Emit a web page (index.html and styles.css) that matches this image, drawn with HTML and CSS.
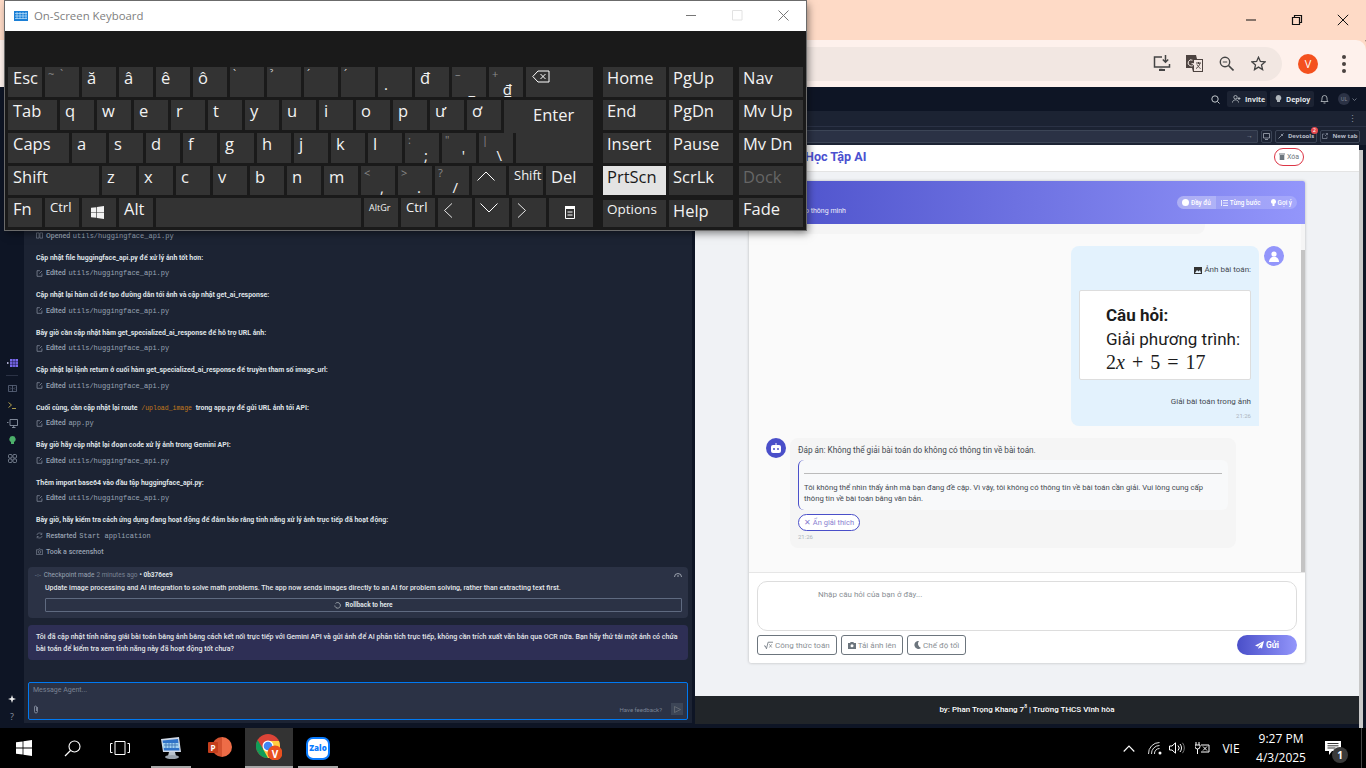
FILE: index.html
```html
<!doctype html>
<html lang="vi">

<head>
  <meta charset="utf-8">
  <title>On-Screen Keyboard</title>
  <link rel="stylesheet" href="styles.css">
</head>

<body>
  <svg class="defs" width="0" height="0">
    <symbol id="i-edit" viewBox="0 0 10 10"><path d="M8.500 5v4h-7V1h4M5 5l3.500-3.500" fill="none" stroke="currentColor" stroke-width=".9"/></symbol>
    <symbol id="i-win" viewBox="0 0 16 16"><path d="M0 2.300 6.600 1.400V7.600H0zM7.400 1.300 16 0V7.600H7.400zM0 8.400H6.600V14.600L0 13.700zM7.400 8.400H16V16L7.400 14.700z" fill="currentColor"/></symbol>
  </svg>

  <div class="browser">
    <div class="chrome-title">
      <span class="win-btn"><svg width="12" height="12" viewBox="0 0 12 12"><path d="M1 6h10" stroke="#111"/></svg></span>
      <span class="win-btn"><svg width="12" height="12" viewBox="0 0 12 12"><path d="M1.500 3.500h7v7h-7zM3.500 3.500v-2h7v7h-2" fill="none" stroke="#111" stroke-width="1.200"/></svg></span>
      <span class="win-btn"><svg width="12" height="12" viewBox="0 0 12 12"><path d="M.8.800l10.400 10.400M11.200.8.800 11.200" stroke="#111"/></svg></span>
    </div>
    <div class="chrome-toolbar">
      <div class="omnibox">
        <span class="omni-icon"><svg width="19" height="17" viewBox="0 0 19 17"><path d="M9 2H1.500v10h15V9M9.500 14.500h-3" fill="none" stroke="#444" stroke-width="1.500"/><path d="M12.500 0v7M9.800 4.500l2.700 2.700 2.700-2.700" fill="none" stroke="#444" stroke-width="1.500"/><path d="M6 15h6" stroke="#444" stroke-width="2"/></svg></span>
        <span class="omni-icon"><svg width="17" height="17" viewBox="0 0 17 17"><path d="M0 0h10l1 4h6v13H7l-1-4H0z" fill="#4d4340"/><path d="M8 5h8v11H8z" fill="#f2e7e2"/><path d="M10 8h5M12.500 7v2M14 8c-.5 2.500-2 4.500-4 5.500M11 9.500c.5 1.500 2 3 3.500 4" fill="none" stroke="#4d4340"/><path d="M6.500 5.200a3 3 0 1 0 1.500 3.500H5.500" fill="none" stroke="#f2e7e2"/></svg></span>
        <span class="omni-icon"><svg width="15" height="15" viewBox="0 0 15 15"><circle cx="6" cy="6" r="4.700" fill="none" stroke="#444" stroke-width="1.400"/><path d="M3.800 6h4.400" stroke="#444"/><path d="M9.500 9.500l5 5" stroke="#444" stroke-width="1.600"/></svg></span>
        <span class="omni-icon"><svg width="15" height="15" viewBox="0 0 15 15"><path d="M7.500 1.200l1.900 4.300 4.600.4-3.500 3.100 1.100 4.600-4.100-2.500-4 2.500 1-4.600L1 5.900l4.600-.4z" fill="none" stroke="#444" stroke-width="1.300"/></svg></span>
      </div>
      <span class="profile">V</span>
      <span class="kebab"><i></i><i></i><i></i></span>
    </div>

    <div class="replit">
      <div class="rp-header">
        <svg class="rp-search" width="9" height="9" viewBox="0 0 9 9"><circle cx="4" cy="4" r="3.200" fill="none" stroke="#c2c8cc"/><path d="M6.500 6.500 8.500 8.500" stroke="#c2c8cc"/></svg>
        <span class="rp-btn rp-invite">
          <svg width="9" height="8" viewBox="0 0 9 8"><circle cx="3.500" cy="2.200" r="1.700" fill="none" stroke="#c2c8cc" stroke-width=".8"/><path d="M.5 7.500c0-3.500 6-3.500 6 0M7 2v3M5.500 3.500h3" fill="none" stroke="#c2c8cc" stroke-width=".8"/></svg>
          Invite
        </span>
        <span class="rp-btn rp-deploy">
          <svg width="7" height="8" viewBox="0 0 7 8"><path d="M3.500 0A3 3 0 0 1 5 5.500V7H2V5.500A3 3 0 0 1 3.500 0z" fill="#b0b6bb"/></svg>
          Deploy
        </span>
        <svg class="rp-bell" width="9" height="10" viewBox="0 0 9 10"><path d="M1 7.500c1-1 1-2 1-3.500a2.500 2.500 0 0 1 5 0c0 1.500 0 2.500 1 3.500zM3.500 9h2" fill="none" stroke="#c2c8cc" stroke-width=".8"/></svg>
        <span class="rp-avatar">UL</span>
        <svg class="rp-caret" width="5" height="3" viewBox="0 0 5 3"><path d="M.5.500 2.500 2.500 4.500.5" fill="none" stroke="#8b93a0" stroke-width=".7"/></svg>
      </div>

      <div class="rp-body">
        <nav class="rail">
          <span class="rail-icon"><svg width="11" height="8" viewBox="0 0 11 8"><path d="M0 3.200h1.500v1.500H0z" fill="#dcd8ff"/><path d="M3 0h8v8H3z" fill="#7c6cf0"/><path d="M3 2.700h8M3 5.300h8M5.700 0v8M8.300 0v8" stroke="#1c1a4a" stroke-width=".6"/></svg></span>
          <span class="rail-sep"></span>
          <span class="rail-icon"><svg width="9" height="7" viewBox="0 0 9 7"><path d="M.5.500h8v6h-8zM4.500.5v6M2 2.500l1 1-1 1M7 2.500l-1 1 1 1" fill="none" stroke="#5f6a80" stroke-width=".8"/></svg></span>
          <span class="rail-icon"><svg width="8" height="7" viewBox="0 0 8 7"><path d="M.5.500 3.500 3 .5 5.500M4 6.500h4" fill="none" stroke="#d6bf58" stroke-width=".8"/></svg></span>
          <span class="rail-icon"><svg width="11" height="9" viewBox="0 0 11 9"><path d="M3 .5h7.500v6H3zM6.700 6.500v2M5 8.500h3.500M0 3.500h1.500" fill="none" stroke="#9aa3b3" stroke-width=".8"/></svg></span>
          <span class="rail-icon"><svg width="7" height="9" viewBox="0 0 7 9"><path d="M3.500 0a3.200 3.200 0 0 1 1.500 6v2H2V6a3.200 3.200 0 0 1 1.500-6z" fill="#4caf6a"/></svg></span>
          <span class="rail-icon"><svg width="9" height="9" viewBox="0 0 9 9"><g fill="none" stroke="#9aa3b3" stroke-width=".7"><rect x=".5" y=".5" width="3.500" height="3.500" rx="1"/><rect x="5" y=".5" width="3.500" height="3.500" rx="1"/><rect x=".5" y="5" width="3.500" height="3.500" rx="1"/><rect x="5" y="5" width="3.500" height="3.500" rx="1"/></g></svg></span>
          <span class="rail-icon rail-bottom"><svg width="8" height="8" viewBox="0 0 8 8"><path d="M4 0l1 3 3 1-3 1-1 3-1-3-3-1 3-1z" fill="#eee"/></svg></span>
          <span class="rail-icon">?</span>
        </nav>

        <section class="agent">
          <div class="agent-log">
            <div class="log-line"><svg class="log-icon" width="7" height="7" viewBox="0 0 8 8"><path d="M.5 1h3v6h-3zM4.500 1h3v6h-3z" fill="none" stroke="currentColor" stroke-width=".6"/></svg>Opened <code>utils/huggingface_api.py</code></div>
            <div class="log-group">
              <p class="log-text">Cập nhật file huggingface_api.py để xử lý ảnh tốt hơn:</p>
              <div class="log-line"><svg class="log-icon" width="7" height="7"><use href="#i-edit"/></svg>Edited <code>utils/huggingface_api.py</code></div>
            </div>
            <div class="log-group">
              <p class="log-text">Cập nhật lại hàm cũ để tạo đường dẫn tới ảnh và cập nhật get_ai_response:</p>
              <div class="log-line"><svg class="log-icon" width="7" height="7"><use href="#i-edit"/></svg>Edited <code>utils/huggingface_api.py</code></div>
            </div>
            <div class="log-group">
              <p class="log-text">Bây giờ cần cập nhật hàm get_specialized_ai_response để hỗ trợ URL ảnh:</p>
              <div class="log-line"><svg class="log-icon" width="7" height="7"><use href="#i-edit"/></svg>Edited <code>utils/huggingface_api.py</code></div>
            </div>
            <div class="log-group">
              <p class="log-text">Cập nhật lại lệnh return ở cuối hàm get_specialized_ai_response để truyền tham số image_url:</p>
              <div class="log-line"><svg class="log-icon" width="7" height="7"><use href="#i-edit"/></svg>Edited <code>utils/huggingface_api.py</code></div>
            </div>
            <div class="log-group">
              <p class="log-text">Cuối cùng, cần cập nhật lại route <code class="log-route">/upload_image</code> trong app.py để gửi URL ảnh tới API:</p>
              <div class="log-line"><svg class="log-icon" width="7" height="7"><use href="#i-edit"/></svg>Edited <code>app.py</code></div>
            </div>
            <div class="log-group">
              <p class="log-text">Bây giờ hãy cập nhật lại đoạn code xử lý ảnh trong Gemini API:</p>
              <div class="log-line"><svg class="log-icon" width="7" height="7"><use href="#i-edit"/></svg>Edited <code>utils/huggingface_api.py</code></div>
            </div>
            <div class="log-group">
              <p class="log-text">Thêm import base64 vào đầu tệp huggingface_api.py:</p>
              <div class="log-line"><svg class="log-icon" width="7" height="7"><use href="#i-edit"/></svg>Edited <code>utils/huggingface_api.py</code></div>
            </div>
            <div class="log-group">
              <p class="log-text">Bây giờ, hãy kiểm tra cách ứng dụng đang hoạt động để đảm bảo rằng tính năng xử lý ảnh trực tiếp đã hoạt động:</p>
              <div class="log-line"><svg class="log-icon" width="7" height="7" viewBox="0 0 8 8"><path d="M1 3.500a3 3 0 0 1 5.500-1M7 4.500a3 3 0 0 1-5.500 1M6.700.8v2H5M1.300 7.200v-2H3" fill="none" stroke="currentColor" stroke-width=".6"/></svg>Restarted <code>Start application</code></div>
              <div class="log-line log-last"><svg class="log-icon" width="7" height="7" viewBox="0 0 8 8"><path d="M.5 2h2l.7-1h1.600l.7 1h2v5.500h-7z" fill="none" stroke="currentColor" stroke-width=".6"/><circle cx="4" cy="4.500" r="1.500" fill="none" stroke="currentColor" stroke-width=".6"/></svg>Took a screenshot</div>
            </div>
          </div>

          <div class="checkpoint">
            <div class="cp-head">
              <span class="cp-dots">-○-</span>
              <span>Checkpoint made</span> <span class="cp-time">2 minutes ago</span> <b>• 0b376ee9</b>
              <svg class="cp-eye" width="8" height="6" viewBox="0 0 8 6"><path d="M.5 5a3.500 3.500 0 0 1 7 0M4 5V3" fill="none" stroke="#b8bec8" stroke-width=".8"/></svg>
            </div>
            <p class="cp-title">Update image processing and AI integration to solve math problems. The app now sends images directly to an AI for problem solving, rather than extracting text first.</p>
            <div class="cp-rollback"><svg width="7" height="7" viewBox="0 0 7 7"><path d="M1.500 1.500a2.800 2.800 0 1 1-.7 2" fill="none" stroke="#c2c8cc" stroke-width=".7"/></svg>Rollback to here</div>
          </div>

          <div class="agent-reply">Tôi đã cập nhật tính năng giải bài toán bằng ảnh bằng cách kết nối trực tiếp với Gemini API và gửi ảnh để AI phân tích trực tiếp, không cần trích xuất văn bản qua OCR nữa. Bạn hãy thử tải một ảnh có chứa bài toán để kiểm tra xem tính năng này đã hoạt động tốt chưa?</div>

          <div class="agent-input">
            <span class="ai-placeholder">Message Agent...</span>
            <div class="ai-foot">
              <svg width="6" height="9" viewBox="0 0 6 9"><path d="M4.500 2v4.500a1.500 1.500 0 0 1-3 0V2a1 1 0 0 1 2 0v4" fill="none" stroke="#9aa3b3" stroke-width=".7"/></svg>
              <span class="ai-feedback">Have feedback?</span>
              <span class="ai-send"><svg width="7" height="7" viewBox="0 0 7 7"><path d="M.5.500 6.500 3.500.5 6.500z" fill="none" stroke="#71757c" stroke-width=".7"/></svg></span>
            </div>
          </div>
        </section>

        <div class="pane-divider"></div>

        <section class="pane">
          <div class="pane-tabs"><span>⋮</span></div>
          <div class="pane-bar">
            <div class="pane-url">→</div>
            <span class="pane-tool pane-device"><svg width="7" height="7" viewBox="0 0 7 7"><path d="M.5.500h6v4.500h-6zM2 6.500h3" fill="none" stroke="#b8bec8" stroke-width=".7"/></svg></span>
            <span class="pane-tool pane-devtools"><svg width="6" height="6" viewBox="0 0 6 6"><path d="M5.500.5 2 4 .5 5.500M3 1l2 2" fill="none" stroke="#9aa3b3" stroke-width=".8"/></svg>Devtools<i class="pane-badge">2</i></span>
            <span class="pane-tool pane-newtab"><svg width="6" height="6" viewBox="0 0 6 6"><path d="M2.500 1H.5v4.500H5V3.500M3 3 5.500.5M3.800.5h1.700v1.700" fill="none" stroke="#9aa3b3" stroke-width=".6"/></svg>New tab</span>
          </div>

          <div class="pv-page">
            <div class="pv-content">
              <header class="pv-head">
                <h1 class="pv-title">Học Tập AI</h1>
                <button class="pv-clear"><svg width="6" height="7" viewBox="0 0 6 7"><path d="M0 .5h6v1H0zM.7 2h4.600v5H.7z" fill="#6c757d"/></svg>Xóa</button>
              </header>

              <main class="pv-main">
                <div class="card">
                  <div class="card-head">
                    <p class="card-sub">o thông minh</p>
                    <div class="mode-pill">
                      <span class="mode mode-on"><svg width="7" height="7" viewBox="0 0 7 7"><circle cx="3.500" cy="3.500" r="3.500" fill="#fff"/></svg>Đầy đủ</span>
                      <span class="mode"><svg width="7" height="6" viewBox="0 0 7 6"><path d="M2 .5h5M2 3h5M2 5.500h5M.5 0v6" stroke="#fff" stroke-width=".8"/></svg>Từng bước</span>
                      <span class="mode"><svg width="5" height="7" viewBox="0 0 5 7"><path d="M2.500 0a2.500 2.500 0 0 1 1 4.800V7h-2V4.800A2.500 2.500 0 0 1 2.500 0z" fill="#fff"/></svg>Gợi ý</span>
                    </div>
                  </div>

                  <div class="card-chat">
                    <div class="chat-scroll">
                      <div class="msg">
                        <span class="avatar avatar-bot"></span>
                        <div class="bubble bubble-old">Hãy gửi câu hỏi hoặc tải ảnh bài toán lên, tôi sẽ giúp bạn giải từng bước thật cụ thể nhé</div>
                      </div>

                      <div class="msg msg-user">
                        <div class="bubble bubble-user">
                          <p class="user-line"><svg width="8" height="7" viewBox="0 0 8 7"><path d="M0 0h8v7H0z" fill="#333"/><path d="M1 6l2-3 1.500 1.500L6 3l1 3z" fill="#e3f2fd"/></svg> Ảnh bài toán:</p>
                          <div class="math-img">
                            <p class="math-q">Câu hỏi:</p>
                            <p class="math-t">Giải phương trình:</p>
                            <p class="math-f">2<i>x</i> + 5 = 17</p>
                          </div>
                          <p class="user-cap">Giải bài toán trong ảnh</p>
                          <span class="msg-time">21:26</span>
                        </div>
                        <span class="avatar avatar-user"><svg width="10" height="11" viewBox="0 0 10 11"><circle cx="5" cy="3" r="2.600" fill="#fff"/><path d="M0 11c0-7 10-7 10 0z" fill="#fff"/></svg></span>
                      </div>

                      <div class="msg">
                        <span class="avatar avatar-bot"><svg width="12" height="11" viewBox="0 0 12 11"><path d="M6 0v2" stroke="#fff"/><rect x="1" y="2" width="10" height="8" rx="2" fill="#fff"/><circle cx="4" cy="6" r="1" fill="#4a4fc9"/><circle cx="8" cy="6" r="1" fill="#4a4fc9"/></svg></span>
                        <div class="bubble bubble-bot">
                          <p>Đáp án: Không thể giải bài toán do không có thông tin về bài toán.</p>
                          <div class="explain">
                            <hr>
                            <p>Tôi không thể nhìn thấy ảnh mà bạn đang đề cập. Vì vậy, tôi không có thông tin về bài toán cần giải. Vui lòng cung cấp thông tin về bài toán bằng văn bản.</p>
                          </div>
                          <button class="hide-btn">✕ Ẩn giải thích</button>
                          <span class="msg-time">21:26</span>
                        </div>
                      </div>
                    </div>
                    <div class="chat-bar"><span class="chat-thumb"></span></div>
                  </div>

                  <div class="card-input">
                    <textarea class="ask-box" placeholder="Nhập câu hỏi của bạn ở đây..."></textarea>
                    <div class="ask-tools">
                      <button class="tool-btn"><svg width="9" height="9" viewBox="0 0 11 9"><path d="M0 5h1.500L3 8.500 5 .5h6" fill="none" stroke="#6c757d"/><path d="M6.500 3l3 4M9.500 3l-3 4" stroke="#6c757d" stroke-width=".8"/></svg>Công thức toán</button>
                      <button class="tool-btn"><svg width="8" height="7" viewBox="0 0 8 7"><path d="M0 1h2l.7-1h2.600L6 1h2v6H0z" fill="#6c757d"/><circle cx="4" cy="3.800" r="1.500" fill="#fff"/></svg>Tải ảnh lên</button>
                      <button class="tool-btn"><svg width="7" height="8" viewBox="0 0 7 8"><path d="M5 0a4 4 0 1 0 2 7A4.500 4.500 0 0 1 5 0z" fill="#6c757d"/></svg>Chế độ tối</button>
                      <button class="send-btn"><svg width="9" height="8" viewBox="0 0 9 8"><path d="M9 0 0 4.500l2.500 1L7 2 3.500 6v2l1.500-1.500 2 1z" fill="#fff"/></svg>Gửi</button>
                    </div>
                  </div>
                </div>
              </main>

              <footer class="pv-foot">by: Phan Trọng Khang 7<sup>8</sup> | Trường THCS Vĩnh hòa</footer>
            </div>
            <div class="pv-scroll"></div>
          </div>
        </section>
      </div>
    </div>
  </div>

  <footer class="taskbar">
    <span class="tb-item"><svg width="16" height="16"><use href="#i-win"/></svg></span>
    <span class="tb-item"><svg width="17" height="17" viewBox="0 0 17 17"><circle cx="10.500" cy="6.500" r="5.500" fill="none" stroke="#fff" stroke-width="1.100"/><path d="M6.500 10.500 1 16" stroke="#fff" stroke-width="1.200"/></svg></span>
    <span class="tb-item"><svg width="20" height="14" viewBox="0 0 20 14"><path d="M5 .5h10v13H5zM2.500 2.500H.5v9h2M17.500 2.500h2v9h-2" fill="none" stroke="#fff"/></svg></span>
    <div class="tb-apps">
      <span class="tb-item tb-app"><svg width="24" height="24" viewBox="0 0 24 24"><path d="M2 3l18-2 2 15H4z" fill="#cfd8e6"/><path d="M3.500 4.500 19 3l1.500 11.500H5z" fill="#2f73c8"/><path d="M4 7h16v5H4z" fill="#9fd0f0"/><path d="M5 9h14M7 7v5M10 7v5M13 7v5M16 7v5" stroke="#3a6fb0" stroke-width=".8"/><path d="M10 16h6l1 4h-8z" fill="#b9c2cc"/><ellipse cx="13" cy="21" rx="7" ry="2" fill="#9aa3ad"/></svg></span>
      <span class="tb-item tb-ppt"><span class="ppt-disc"></span><span class="ppt-p">P</span></span>
      <span class="tb-item tb-active"><svg width="26" height="26" viewBox="0 0 26 26"><circle cx="12" cy="12" r="12" fill="#db4437"/><path d="M12 12 1.600 18A12 12 0 0 0 12 24z" fill="#0f9d58"/><path d="M1.600 6A12 12 0 0 0 1.600 18L7 15z" fill="#0f9d58"/><path d="M23 7H12l-5 8 5 9A12 12 0 0 0 24 12a12 12 0 0 0-1-5z" fill="#ffcd40"/><circle cx="12" cy="12" r="5.500" fill="#fff"/><circle cx="12" cy="12" r="4.300" fill="#4285f4"/><circle cx="19" cy="19" r="7.500" fill="#e8501f"/></svg><span class="chrome-v">V</span></span>
      <span class="tb-item tb-app"><span class="zalo">Zalo</span></span>
    </div>
    <div class="tray">
      <span class="tray-item"><svg width="12" height="7" viewBox="0 0 12 7"><path d="M.7 6.500 6 1l5.300 5.500" fill="none" stroke="#fff" stroke-width="1.100"/></svg></span>
      <span class="tray-item"><svg width="15" height="13" viewBox="0 0 15 13"><g fill="none" stroke="#ddd"><path d="M0.500 12a11 11 0 0 1 11-11.500"/><path d="M3.500 12a8 8 0 0 1 8-8.500"/><path d="M6.500 12a5 5 0 0 1 5-5.500"/></g><circle cx="12" cy="11" r="1.500" fill="#fff"/></svg></span>
      <span class="tray-item"><svg width="16" height="12" viewBox="0 0 16 12"><path d="M.5 4h2.500L6.500.8v10.400L3 8H.5z" fill="none" stroke="#fff"/><path d="M9 3.500a3.500 3.500 0 0 1 0 5M11 2a6 6 0 0 1 0 8" fill="none" stroke="#fff"/><path d="M13.500 .8a9 9 0 0 1 0 10.400" fill="none" stroke="#777"/></svg></span>
      <span class="tray-item"><svg width="15" height="12" viewBox="0 0 15 12"><path d="M1 0v3M4 0v3M0 3h5v1.500a2.500 2.500 0 0 1-5 0zM2.500 7v5" fill="none" stroke="#fff"/><path d="M6 3h8v7H6" fill="none" stroke="#fff"/><path d="M8 4.500l4 4M12 4.500l-4 4" stroke="#fff"/></svg></span>
      <span class="tray-item tray-lang">VIE</span>
      <span class="tray-item tray-clock"><span>9:27 PM</span><span>4/3/2025</span></span>
      <span class="tray-item tray-notif"><svg width="16" height="14" viewBox="0 0 16 14"><path d="M0 0h16v10H7l-3 4v-4H0z" fill="#fff"/><path d="M2.500 2.500h11M2.500 4.800h11M2.500 7h8" stroke="#000" stroke-width=".8"/></svg><i class="notif-count">1</i></span>
      <span class="tray-spacer"></span>
      <span class="tray-peek"></span>
    </div>
  </footer>

  <!-- on-screen keyboard floats over the browser -->
  <div class="osk">
    <div class="osk-title">
      <svg width="14" height="10" viewBox="0 0 14 10"><path d="M0 0h14v10H0z" fill="#1b7fd6"/><path d="M1 2.500h12M1 5h12M1 7.500h12M3 1v7M6 1v7M9 1v7M12 1v7" stroke="#bfe3fa" stroke-width=".7"/></svg>
      <span class="osk-name">On-Screen Keyboard</span>
      <span class="osk-ctl osk-min"><svg width="11" height="11" viewBox="0 0 11 11"><path d="M0 5.500h10" stroke="#777"/></svg></span>
      <span class="osk-ctl"><svg width="11" height="11" viewBox="0 0 11 11"><path d="M.5.500h9.500v9.500H.5z" fill="none" stroke="#e2e2e2"/></svg></span>
      <span class="osk-ctl"><svg width="11" height="11" viewBox="0 0 11 11"><path d="M.5.500l10 10M10.500.5l-10 10" stroke="#777"/></svg></span>
    </div>
    <div class="osk-body">
      <div class="osk-main">
        <div class="key-row">
          <span class="key">Esc</span>
          <span class="key key-dual"><span class="hi">~ &nbsp;ˋ</span></span>
          <span class="key">ă</span><span class="key">â</span><span class="key">ê</span><span class="key">ô</span>
          <span class="key key-dual"><span class="hi hi-w">`</span></span>
          <span class="key key-dual"><span class="hi hi-w">ˀ</span></span>
          <span class="key key-dual"><span class="hi hi-w">´</span></span>
          <span class="key key-dual"><span class="hi hi-w">´</span></span>
          <span class="key key-dual"><span class="lo lo-dot">.</span></span>
          <span class="key">đ</span>
          <span class="key key-dual"><span class="hi">–</span><span class="lo">_</span></span>
          <span class="key key-dual"><span class="hi">+</span><span class="lo">₫</span></span>
          <span class="key key-back"><svg width="18" height="13" viewBox="0 0 18 13"><path d="M6 1h11v11H6L.8 6.500z" fill="none" stroke="#fff"/><path d="M8.500 4l5 5M13.500 4l-5 5" stroke="#fff"/></svg></span>
        </div>
        <div class="key-row">
          <span class="key key-tab">Tab</span>
          <span class="key">q</span><span class="key">w</span><span class="key">e</span><span class="key">r</span><span class="key">t</span><span class="key">y</span><span class="key">u</span><span class="key">i</span><span class="key">o</span><span class="key">p</span><span class="key">ư</span><span class="key">ơ</span>
          <span class="key key-enter">Enter</span>
        </div>
        <div class="key-row">
          <span class="key key-caps">Caps</span>
          <span class="key">a</span><span class="key">s</span><span class="key">d</span><span class="key">f</span><span class="key">g</span><span class="key">h</span><span class="key">j</span><span class="key">k</span><span class="key">l</span>
          <span class="key key-dual"><span class="hi">:</span><span class="lo">;</span></span>
          <span class="key key-dual"><span class="hi">"</span><span class="lo">'</span></span>
          <span class="key key-dual"><span class="hi">|</span><span class="lo">\</span></span>
          <span class="key key-enter2"></span>
        </div>
        <div class="key-row key-row-low">
          <span class="key key-shift">Shift</span>
          <span class="key">z</span><span class="key">x</span><span class="key">c</span><span class="key">v</span><span class="key">b</span><span class="key">n</span><span class="key">m</span>
          <span class="key key-dual"><span class="hi">&lt;</span><span class="lo">,</span></span>
          <span class="key key-dual"><span class="hi">&gt;</span><span class="lo">.</span></span>
          <span class="key key-dual"><span class="hi">?</span><span class="lo">/</span></span>
          <span class="key key-arrow"><svg width="18" height="10" viewBox="0 0 18 10"><path d="M.5 9.500 9 1l8.500 8.500" fill="none" stroke="#fff"/></svg></span>
          <span class="key key-sm">Shift</span>
          <span class="key key-del">Del</span>
        </div>
        <div class="key-row key-row-low">
          <span class="key">Fn</span>
          <span class="key key-sm">Ctrl</span>
          <span class="key key-win"><svg width="13" height="13"><use href="#i-win"/></svg></span>
          <span class="key">Alt</span>
          <span class="key key-space"></span>
          <span class="key key-xs">AltGr</span>
          <span class="key key-sm">Ctrl</span>
          <span class="key key-arrow"><svg width="10" height="15" viewBox="0 0 10 17"><path d="M9.500.5 1 8.500l8.500 8" fill="none" stroke="#fff"/></svg></span>
          <span class="key key-arrow"><svg width="18" height="10" viewBox="0 0 18 10"><path d="M.5.500 9 9 17.500.5" fill="none" stroke="#fff"/></svg></span>
          <span class="key key-arrow"><svg width="10" height="15" viewBox="0 0 10 17"><path d="M.5.500 9 8.500l-8.500 8" fill="none" stroke="#fff"/></svg></span>
          <span class="key key-menu"><svg width="10" height="13" viewBox="0 0 10 13"><path d="M.5 2.500h9v10h-9z" fill="none" stroke="#fff"/><path d="M0 .5h10v2H0zM2.500 6h5M2.500 9h5" stroke="#fff" fill="#fff"/></svg></span>
        </div>
      </div>
      <div class="osk-side">
        <span class="key">Home</span><span class="key">PgUp</span><span class="key">Nav</span>
        <span class="key">End</span><span class="key">PgDn</span><span class="key">Mv Up</span>
        <span class="key">Insert</span><span class="key">Pause</span><span class="key">Mv Dn</span>
        <span class="key key-on">PrtScn</span><span class="key">ScrLk</span><span class="key key-off">Dock</span>
        <span class="key key-opt">Options</span><span class="key key-help">Help</span><span class="key">Fade</span>
      </div>
    </div>
  </div>
</body>

</html>
```

FILE: styles.css
```css
* {
  box-sizing: border-box;
}

html,
body {
  margin: 0;
  padding: 0;
  width: 1366px;
  height: 768px;
  overflow: hidden;
  background: #000;
  font-family: "Open Sans", "Noto Sans", sans-serif;
}

p,
h1 {
  margin: 0;
}

button {
  font: inherit;
  cursor: pointer;
}

svg {
  display: block;
  flex: none;
}

.defs {
  position: absolute;
}

/* browser window */
.browser {
  height: 728px;
  display: flex;
  flex-direction: column;
}

.chrome-title {
  height: 40px;
  background: #fedac6;
  display: flex;
  justify-content: flex-end;
}

.win-btn {
  width: 46px;
  display: flex;
  align-items: center;
  justify-content: center;
}

.chrome-toolbar {
  height: 47px;
  background: #fef1ec;
  border-radius: 0 10px 0 0;
  display: flex;
  align-items: center;
  padding-right: 12px;
  box-shadow: 0 -8px 0 #fedac6;
}

.omnibox {
  margin-left: 100px;
  flex: 1;
  height: 34px;
  border-radius: 17px;
  background: #f2e7e2;
  display: flex;
  justify-content: flex-end;
  padding-right: 8px;
}

.omni-icon {
  width: 32px;
  display: flex;
  align-items: center;
  justify-content: center;
}

.profile {
  margin-left: 16px;
  width: 20px;
  height: 20px;
  border-radius: 50%;
  background: #f4511e;
  color: #fff;
  font-size: 11px;
  line-height: 20px;
  text-align: center;
}

.kebab {
  margin-left: 16px;
  width: 20px;
  display: flex;
  flex-direction: column;
  align-items: center;
  gap: 3px;
}

.kebab i {
  width: 4px;
  height: 4px;
  border-radius: 50%;
  background: #4a4340;
}

/* replit shell */
.replit {
  flex: 1;
  min-height: 0;
  background: #0e1525;
  display: flex;
  flex-direction: column;
  color: #c2c8cc;
}

.rp-header {
  height: 24px;
  display: flex;
  align-items: center;
  justify-content: flex-end;
  padding-right: 9px;
  font-size: 7px;
}

.rp-search {
  margin-right: 7px;
}

.rp-btn {
  height: 16px;
  background: #1c2333;
  border-radius: 2px;
  display: flex;
  align-items: center;
  gap: 4px;
  padding: 0 5px;
  font-weight: 700;
  color: #e4e7ea;
}

.rp-invite {
  width: 40px;
}

.rp-deploy {
  width: 44px;
  margin-left: 3px;
}

.rp-bell {
  margin-left: 6px;
}

.rp-avatar {
  margin-left: 9px;
  width: 12px;
  height: 12px;
  border-radius: 50%;
  background: #2b3245;
  color: #8b93a0;
  font-size: 5px;
  line-height: 12px;
  text-align: center;
}

.rp-caret {
  margin-left: 2px;
}

.rp-body {
  flex: 1;
  min-height: 0;
  display: flex;
}

.rail {
  width: 24px;
  display: flex;
  flex-direction: column;
  align-items: center;
  padding: 243px 0 3px;
}

.rail-icon {
  width: 18px;
  height: 17.500px;
  display: flex;
  align-items: center;
  justify-content: center;
  color: #8b93a0;
  font-size: 9px;
}

.rail-sep {
  width: 12px;
  height: 1px;
  margin: 3px 0 4px;
  background: #2b3245;
}

.rail-bottom {
  margin-top: auto;
}

/* agent panel */
.agent {
  width: 668px;
  margin-bottom: 5px;
  background: #1c2333;
  display: flex;
  flex-direction: column;
  justify-content: flex-end;
  padding: 0 4px 3px;
  overflow: hidden;
  font-family: Roboto, sans-serif;
}

.agent-log {
  padding: 0 0 8px 8px;
  display: flex;
  flex-direction: column;
  gap: 7.500px;
}

.log-group {
  display: flex;
  flex-direction: column;
}

.log-text {
  height: 15px;
  line-height: 15px;
  font-size: 6.950px;
  font-weight: 700;
  color: #dfe2e6;
  white-space: nowrap;
}

.log-route {
  margin: 0 2px;
  font: 6.500px "Liberation Mono", monospace;
  color: #c37a1c;
}

.log-line {
  height: 15px;
  display: flex;
  align-items: center;
  font-size: 7px;
  font-weight: 500;
  color: #9aa3b3;
  white-space: pre;
}

.log-last {
  margin-top: 1px;
}

.log-line code {
  margin-left: 1px;
  font: 7px "Liberation Mono", monospace;
}

.log-icon {
  margin-right: 3px;
  color: #9aa3b3;
}

.checkpoint {
  height: 51px;
  background: #2b3245;
  border-radius: 4px;
  padding: 3px 6px 0 7px;
  font-size: 6.500px;
  color: #9aa3b3;
}

.cp-head {
  height: 10px;
  display: flex;
  align-items: center;
  gap: 2px;
}

.cp-dots {
  font-size: 5px;
  margin-right: 1px;
}

.cp-time {
  color: #7a8394;
}

.cp-head b {
  color: #dfe2e6;
}

.cp-eye {
  margin-left: auto;
}

.cp-title {
  margin: 3px 0 0 10px;
  height: 10px;
  line-height: 10px;
  font-size: 7.030px;
  font-weight: 500;
  color: #e4e7ea;
  white-space: nowrap;
}

.cp-rollback {
  margin: 5px 0 0 10px;
  height: 14px;
  border: 1px solid #5f6a80;
  border-radius: 1px;
  display: flex;
  align-items: center;
  justify-content: center;
  gap: 4px;
  font-weight: 700;
  color: #dfe2e6;
}

.agent-reply {
  margin-top: 7px;
  height: 35px;
  padding: 6px 8px 0;
  background: #2e2f55;
  border-radius: 4px;
  font-size: 7.100px;
  line-height: 12px;
  font-weight: 500;
  color: #e4e7ea;
}

.agent-input {
  margin-top: 22px;
  height: 38px;
  background: #2b3245;
  border: 1px solid #0079f2;
  border-radius: 2px;
  padding: 3px 4px 4px 4px;
  display: flex;
  flex-direction: column;
  justify-content: space-between;
  font-size: 7px;
  color: #7a8394;
}

.ai-foot {
  display: flex;
  align-items: center;
}

.ai-feedback {
  margin-left: auto;
  font-size: 6px;
}

.ai-send {
  margin-left: 9px;
  width: 12px;
  height: 12px;
  background: #3c4556;
  display: flex;
  align-items: center;
  justify-content: center;
}

.pane-divider {
  width: 3px;
}

/* preview pane */
.pane {
  flex: 1;
  min-width: 0;
  display: flex;
  flex-direction: column;
  background: #1c2333;
}

.pane-tabs {
  height: 15px;
  background: #1c2333;
  display: flex;
  justify-content: flex-end;
  padding-right: 9px;
  font-size: 9px;
  line-height: 15px;
  color: #8b93a0;
}

.pane-bar {
  height: 19px;
  border-top: 1px solid #2b3245;
  display: flex;
  align-items: center;
  padding-right: 6px;
  font-size: 6px;
  font-weight: 700;
}

.pane-url {
  flex: 1;
  height: 13px;
  background: #2b3245;
  border: 1px solid #3c4556;
  border-radius: 1px;
  text-align: right;
  padding-right: 4px;
  font-size: 7px;
  line-height: 10px;
  color: #8b93a0;
}

.pane-tool {
  height: 13px;
  margin-left: 3px;
  border: 1px solid #3c4556;
  border-radius: 2px;
  display: flex;
  align-items: center;
  justify-content: center;
  gap: 4px;
  position: relative;
  color: #b8bec8;
}

.pane-device {
  width: 11px;
}

.pane-devtools {
  width: 42px;
}

.pane-newtab {
  width: 40px;
}

.pane-badge {
  position: absolute;
  top: -4px;
  right: -2px;
  width: 7px;
  height: 7px;
  border-radius: 50%;
  background: #e5484d;
  color: #fff;
  font: 5px/7px "Noto Sans", sans-serif;
  text-align: center;
}

.pv-page {
  flex: 1;
  min-height: 0;
  display: flex;
  padding-right: 3px;
  padding-bottom: 4px;
  background: #0e1525;
}

.pv-content {
  width: 664px;
  display: flex;
  flex-direction: column;
  font-family: Roboto, sans-serif;
}

.pv-scroll {
  width: 4px;
  margin-top: 5px;
  margin-bottom: -4px;
  background: #c9c9c9;
}

.pv-head {
  height: 27px;
  background: #fff;
  border-bottom: 1px solid #e4e4e4;
  display: flex;
  align-items: center;
  justify-content: space-between;
  padding: 0 55px 3px 110px;
}

.pv-title {
  font-size: 12.600px;
  font-weight: 700;
  color: #4a50d0;
}

.pv-clear {
  width: 30px;
  height: 18px;
  padding: 0;
  background: #fff;
  border: 1px solid #dc3545;
  border-radius: 9px;
  display: flex;
  align-items: center;
  justify-content: center;
  gap: 2px;
  font-size: 7px;
  color: #6c757d;
}

.pv-main {
  flex: 1;
  min-height: 0;
  background: #f0f2f5;
  padding: 9px 0 0 54px;
}

.pv-foot {
  height: 28px;
  background: #212529;
  color: #fff;
  font-size: 8px;
  font-weight: 500;
  line-height: 28px;
  text-align: center;
}

.pv-foot sup {
  font-size: 5px;
  line-height: 0;
}

/* chat card */
.card {
  width: 556px;
  height: 482px;
  background: #fff;
  border-radius: 2px;
  box-shadow: 0 0 3px rgba(0, 0, 0, .25);
  display: flex;
  flex-direction: column;
  overflow: hidden;
}

.card-head {
  height: 43px;
  background: linear-gradient(90deg, #4a4fc9, #9396fb);
  display: flex;
  align-items: center;
  justify-content: space-between;
  padding: 0 8px 0 56px;
  color: #fff;
}

.card-sub {
  margin-top: 17px;
  font-size: 7px;
  line-height: 9px;
  opacity: .9;
}

.mode-pill {
  height: 13px;
  border-radius: 7px;
  background: rgba(255, 255, 255, .18);
  display: flex;
  font-size: 6.400px;
  font-weight: 500;
}

.mode {
  display: flex;
  align-items: center;
  gap: 2px;
  padding: 0 5px;
}

.mode-on {
  background: rgba(255, 255, 255, .2);
  border-radius: 7px 0 0 7px;
}

.card-chat {
  flex: 1;
  min-height: 0;
  display: flex;
  background: #fafafa;
}

.chat-scroll {
  flex: 1;
  min-width: 0;
  display: flex;
  flex-direction: column;
  justify-content: flex-end;
  gap: 12px;
  padding: 0 17px 24px 17px;
  overflow: hidden;
}

.chat-bar {
  width: 4px;
  padding-top: 26px;
  background: #f5f5f5;
}

.chat-thumb {
  display: block;
  height: 100%;
  background: #c4c4c4;
}

.msg {
  display: flex;
  gap: 4px;
  flex: none;
  align-items: flex-start;
}

.msg-user {
  justify-content: flex-end;
  gap: 5px;
}

.avatar {
  width: 20px;
  height: 20px;
  border-radius: 50%;
  display: flex;
  align-items: center;
  justify-content: center;
  flex: none;
}

.avatar-bot {
  background: #4a4fc9;
}

.avatar-user {
  background: #9396fb;
}

.bubble {
  border-radius: 8px;
  font-size: 8.200px;
  line-height: 12px;
  color: #444a52;
}

.bubble-old {
  width: 415px;
  height: 34px;
  padding: 13px 0 0 70px;
  background: #f5f5f5;
  white-space: nowrap;
}

.bubble-user {
  width: 188px;
  background: #e3f2fd;
  padding: 18px 8px 7px;
  display: flex;
  flex-direction: column;
  align-items: flex-end;
  border-radius: 8px 8px 0 8px;
  font-size: 8px;
}

.user-line {
  display: flex;
  align-items: center;
  gap: 2px;
}

.math-img {
  margin-top: 14px;
  width: 172px;
  height: 90px;
  background: #fff;
  border: 1px solid #ddd;
  border-radius: 2px;
  padding: 12px 0 0 26px;
  color: #1c1c1c;
  font-size: 17px;
  line-height: 24px;
}

.math-q {
  font-weight: 700;
}

.math-f {
  font: 20px/23px "Liberation Serif", serif;
  word-spacing: 2px;
}

.user-cap {
  margin-top: 16px;
}

.msg-time {
  display: block;
  margin-top: 5px;
  font-size: 6px;
  line-height: 6px;
  color: #adb5bd;
}

.bubble-bot {
  width: 446px;
  padding: 6px 8px 8px;
  background: #f5f5f5;
}

.explain {
  margin-top: 4px;
  height: 50px;
  background: #f8f9fa;
  border-left: 1px solid #4a4fc9;
  border-radius: 6px;
  padding: 13px 6px 0 5px;
  font-size: 7.700px;
  line-height: 11px;
}

.explain hr {
  margin: 0 0 7.500px;
  border: 0;
  height: 1px;
  background: #bbb;
}

.hide-btn {
  display: block;
  margin-top: 4px;
  width: 62px;
  height: 17px;
  padding: 0;
  background: #fff;
  border: 1px solid #4a4fc9;
  border-radius: 9px;
  font-size: 7.500px;
  color: #8a7fd0;
}

.bubble-bot .msg-time {
  margin-top: 3px;
}

.card-input {
  height: 91px;
  border-top: 1px solid #e6e6e6;
  padding: 8px 8px 0 8px;
}

.ask-box {
  display: block;
  width: 100%;
  height: 50px;
  border: 1px solid #ddd;
  border-radius: 10px;
  padding: 7px 0 0 60px;
  resize: none;
  font: 8px/11px Roboto, sans-serif;
}

.ask-box::placeholder {
  color: #8a8f95;
}

.ask-tools {
  margin-top: 4px;
  display: flex;
  gap: 4px;
}

.tool-btn {
  height: 20px;
  padding: 0 6px;
  background: #fff;
  border: 1px solid #6c757d;
  border-radius: 3px;
  display: flex;
  align-items: center;
  gap: 2px;
  font-size: 8px;
  color: #8a8f95;
}

.send-btn {
  margin-left: auto;
  width: 60px;
  height: 20px;
  border: 0;
  border-radius: 10px;
  background: linear-gradient(90deg, #4a4fc9, #9396fb);
  color: #fff;
  display: flex;
  align-items: center;
  justify-content: center;
  gap: 2px;
  font-size: 8.500px;
  font-weight: 700;
}

/* taskbar */
.taskbar {
  height: 40px;
  background: #000;
  display: flex;
  color: #fff;
}

.tb-item {
  width: 48px;
  height: 40px;
  display: flex;
  align-items: center;
  justify-content: center;
  position: relative;
  color: #fff;
}

.tb-apps {
  margin-left: 3px;
  display: flex;
  gap: 1px;
}

.tb-app::after {
  content: "";
  position: absolute;
  left: 4px;
  right: 4px;
  bottom: 0;
  height: 2px;
  background: #a8a8a8;
}

.tb-active {
  background: #333;
  border-bottom: 2px solid #a8a8a8;
}

.ppt-disc {
  width: 20px;
  height: 20px;
  margin: 0 0 2px 4px;
  border-radius: 50%;
  background: linear-gradient(90deg, #d35230 50%, #ed6c47 50%);
}

.ppt-p {
  position: absolute;
  left: 12px;
  top: 14px;
  width: 10px;
  height: 11px;
  background: #c43e1c;
  border-radius: 1px;
  font-size: 8px;
  font-weight: 700;
  line-height: 11px;
  text-align: center;
}

.chrome-v {
  position: absolute;
  left: 23px;
  top: 19px;
  width: 14px;
  font-size: 10px;
  font-weight: 700;
  text-align: center;
}

.zalo {
  width: 24px;
  height: 23px;
  border-radius: 7px;
  background: #fff;
  border: 2px solid #0a7cff;
  color: #0a7cff;
  font-size: 8px;
  font-weight: 800;
  line-height: 18px;
  text-align: center;
}

.tray {
  margin-left: auto;
  display: grid;
  grid-template-columns: 24px 28px 16px 34px 24px 76px 28px 14px 5px;
  width: 249px;
}

.tray-item {
  display: flex;
  align-items: center;
  justify-content: center;
}

.tray-lang {
  font-size: 12px;
}

.tray-clock {
  flex-direction: column;
  font-size: 12px;
  line-height: 19px;
  padding-bottom: 1px;
}

.tray-notif {
  position: relative;
}

.notif-count {
  position: absolute;
  left: 13px;
  top: 19px;
  width: 16px;
  height: 16px;
  border-radius: 50%;
  background: #3a3a3a;
  font: 700 10px/16px "Open Sans", sans-serif;
  text-align: center;
}

.tray-peek {
  border-left: 1px solid #444;
}

/* on-screen keyboard */
.osk {
  position: absolute;
  left: 5px;
  top: 1px;
  width: 801px;
  height: 229px;
  background: #1a1a1a;
  box-shadow: 0 0 0 1px #6b6b6b, 2px 3px 8px rgba(0, 0, 0, .5);
}

.osk-title {
  height: 30px;
  background: #fff;
  display: flex;
  align-items: center;
  padding: 0 0 1px 9px;
}

.osk-name {
  margin-left: 6px;
  font-size: 11.400px;
  color: #808080;
}

.osk-ctl {
  width: 46px;
  display: flex;
  justify-content: center;
}

.osk-min {
  margin-left: auto;
}

.osk-body {
  margin-top: 36px;
  padding-left: 3px;
  display: flex;
  gap: 10px;
}

.osk-main {
  width: 585px;
  display: flex;
  flex-direction: column;
  gap: 3px;
}

.key-row {
  height: 30px;
  display: flex;
  gap: 3px;
}

.key-row-low {
  height: 29px;
}

.key {
  width: 34px;
  height: 100%;
  flex: none;
  background: #333;
  color: #f2f2f2;
  padding: 0 5px;
  font-size: 16.500px;
  line-height: 22px;
  white-space: nowrap;
}

.key-dual {
  display: flex;
  flex-direction: column;
  padding: 0 3px;
}

.hi {
  font-size: 11px;
  line-height: 13px;
  color: #8a8a8a;
}

.hi-w {
  color: #ddd;
}

.lo {
  margin: auto 8px 0 auto;
  font-size: 15px;
  line-height: 16px;
}

.lo-dot {
  margin: auto auto 5px 3px;
}

.key-back {
  width: 67px;
  padding: 3px 0 0 6px;
}

.key-tab {
  width: 49px;
}

.key-enter {
  width: 89px;
  height: 33px;
  padding: 4px 0 0 29px;
}

.key-caps {
  width: 61px;
}

.key-enter2 {
  width: 77px;
}

.key-shift {
  width: 91px;
}

.key-arrow {
  display: flex;
  padding: 5px 0 0 5px;
}

.key-sm {
  font-size: 13px;
  line-height: 19px;
}

.key-xs {
  font-size: 9px;
  line-height: 19px;
}

.key-del {
  width: 47px;
}

.key-win {
  padding: 8px 0 0 9px;
}

.key-space {
  width: 205px;
}

.key-menu {
  width: 44px;
  padding: 8px 0 0 16px;
}

.osk-side {
  display: grid;
  grid-template-columns: 63px 64px 64px;
  grid-template-rows: 30px 30px 30px 29px 29px;
  gap: 3px;
}

.osk-side .key {
  width: auto;
  padding: 0 4px;
}

.osk-side .key:nth-child(3n) {
  margin-left: 3px;
  margin-right: -3px;
}

.key-on {
  background: #e3e3e3;
  color: #1a1a1a;
}

.osk-side .key-off {
  color: #666;
}

.osk-side .key-opt {
  margin-top: 2px;
  height: 27px;
  font-size: 13.500px;
  line-height: 18px;
}

.key-help {
  margin-top: 2px;
  height: 27px;
}
```
